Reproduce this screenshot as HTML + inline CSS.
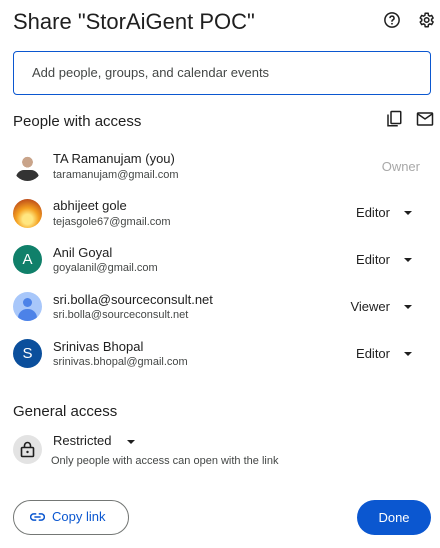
<!DOCTYPE html>
<html><head><style>
*{margin:0;padding:0;box-sizing:border-box}
body{width:440px;height:548px;background:#fff;font-family:"Liberation Sans",Arial,sans-serif;color:#1f1f1f;position:relative;overflow:hidden}
.a{position:absolute}
.av{position:absolute;left:13px;width:29px;height:29px;border-radius:50%;color:#fff;font-size:15px;text-align:center;line-height:29px}
.n{position:absolute;left:53px;font-size:13px;color:#1f1f1f}
.e{position:absolute;left:53px;font-size:11px;color:#444746}
.r{position:absolute;right:50px;font-size:13px;color:#1f1f1f;text-align:right}
.c{position:absolute;left:404px;width:0;height:0;border-left:4.5px solid transparent;border-right:4.5px solid transparent;border-top:4.5px solid #1f1f1f}
</style></head><body>
<div class="a" style="left:13px;top:9px;font-size:22px;">Share "StorAiGent POC"</div>
<svg class="a" style="left:383px;top:11px" width="18" height="18" viewBox="0 0 24 24"><circle cx="12" cy="12" r="9.5" fill="none" stroke="#1f1f1f" stroke-width="2"/><path d="M9.3 9.5a2.7 2.7 0 1 1 3.7 2.5c-.7.3-1 .8-1 1.5v.8" fill="none" stroke="#1f1f1f" stroke-width="2"/><circle cx="12" cy="17" r="1.2" fill="#1f1f1f"/></svg>
<svg class="a" style="left:417px;top:11px" width="18" height="18" viewBox="0 0 24 24"><path d="M19.4 13a7.5 7.5 0 0 0 0-2l2.1-1.6-2-3.5-2.5 1a7.3 7.3 0 0 0-1.7-1L14.9 3h-4l-.4 2.9a7.3 7.3 0 0 0-1.700 1l-2.5-1-2 3.5L6.4 11a7.5 7.5 0 0 0 0 2l-2.1 1.6 2 3.5 2.5-1a7.3 7.3 0 0 0 1.7 1l.4 2.9h4l.4-2.9a7.3 7.3 0 0 0 1.7-1l2.5 1 2-3.5z" fill="none" stroke="#1f1f1f" stroke-width="2" stroke-linejoin="round"/><circle cx="12.9" cy="12" r="3" fill="none" stroke="#1f1f1f" stroke-width="2"/></svg>
<div class="a" style="left:13px;top:51px;width:418px;height:44px;border:1.5px solid #0b57d0;border-radius:4px"></div>
<div class="a" style="left:32px;top:65px;font-size:13px;color:#444746">Add people, groups, and calendar events</div>
<div class="a" style="left:13px;top:113px;font-size:15px">People with access</div>
<svg class="a" style="left:385px;top:110px" width="18" height="18" viewBox="0 0 24 24"><rect x="8" y="2" width="13" height="16" rx="1" fill="none" stroke="#1f1f1f" stroke-width="2"/><path d="M4 6v15h13" fill="none" stroke="#1f1f1f" stroke-width="2"/></svg>
<svg class="a" style="left:416px;top:111px" width="18" height="16" viewBox="0 0 24 20"><rect x="2" y="2" width="20" height="16" rx="1" fill="none" stroke="#1f1f1f" stroke-width="2"/><path d="M2 3l10 7 10-7" fill="none" stroke="#1f1f1f" stroke-width="2"/></svg>

<div class="av" style="top:152px;background:radial-gradient(circle at 50% 35%,#c9a48a 0 22%,#fff 23%);overflow:hidden"><div style="position:absolute;left:3px;top:18px;width:23px;height:14px;border-radius:8px 8px 0 0;background:#333"></div></div>
<div class="n" style="top:151px">TA Ramanujam (you)</div><div class="e" style="top:169px">taramanujam@gmail.com</div>
<div class="a" style="right:20px;top:159px;font-size:13px;color:#a8a8a8">Owner</div>

<div class="av" style="top:199px;background:radial-gradient(circle at 50% 70%,#ffe680 0 20%,#f4a020 45%,#c0501a 80%)"></div>
<div class="n" style="top:198px">abhijeet gole</div><div class="e" style="top:216px">tejasgole67@gmail.com</div>
<div class="r" style="top:205px">Editor</div><div class="c" style="top:211px"></div>

<div class="av" style="top:245px;background:#10806a">A</div>
<div class="n" style="top:245px">Anil Goyal</div><div class="e" style="top:262px">goyalanil@gmail.com</div>
<div class="r" style="top:252px">Editor</div><div class="c" style="top:258px"></div>

<div class="av" style="top:292px;background:#a8c7fa;overflow:hidden"><div style="position:absolute;left:10px;top:6px;width:9px;height:9px;border-radius:50%;background:#4c82e8"></div><div style="position:absolute;left:5px;top:17px;width:19px;height:12px;border-radius:9px 9px 0 0;background:#4c82e8"></div></div>
<div class="n" style="top:292px">sri.bolla@sourceconsult.net</div><div class="e" style="top:309px">sri.bolla@sourceconsult.net</div>
<div class="r" style="top:299px">Viewer</div><div class="c" style="top:305px"></div>

<div class="av" style="top:339px;background:#0b4f9c">S</div>
<div class="n" style="top:339px">Srinivas Bhopal</div><div class="e" style="top:356px">srinivas.bhopal@gmail.com</div>
<div class="r" style="top:346px">Editor</div><div class="c" style="top:352px"></div>

<div class="a" style="left:13px;top:403px;font-size:15px">General access</div>
<div class="a" style="left:13px;top:435px;width:29px;height:29px;border-radius:50%;background:#e3e3e3"></div>
<svg class="a" style="left:20px;top:441px" width="15" height="17" viewBox="0 0 15 17"><rect x="1.5" y="6.5" width="12" height="9" rx="1" fill="none" stroke="#1f1f1f" stroke-width="1.6"/><path d="M4.5 6.5V4.5a3 3 0 0 1 6 0v2" fill="none" stroke="#1f1f1f" stroke-width="1.6"/><circle cx="7.5" cy="11" r="1.2" fill="#1f1f1f"/></svg>
<div class="a" style="left:53px;top:433px;font-size:13px">Restricted</div>
<div class="a" style="left:127px;top:440px;border-left:4px solid transparent;border-right:4px solid transparent;border-top:4px solid #1f1f1f"></div>
<div class="a" style="left:51px;top:455px;font-size:11px;color:#444746">Only people with access can open with the link</div>

<div class="a" style="left:13px;top:500px;width:116px;height:35px;border:1px solid #747775;border-radius:18px"></div>
<svg class="a" style="left:30px;top:511px" width="15" height="12" viewBox="0 0 24 12"><path d="M10 1H6a5 5 0 0 0 0 10h4M14 1h4a5 5 0 0 1 0 10h-4M7 6h10" fill="none" stroke="#0b57d0" stroke-width="2.4"/></svg>
<div class="a" style="left:52px;top:509px;font-size:13px;color:#0b57d0">Copy link</div>
<div class="a" style="left:357px;top:500px;width:74px;height:35px;border-radius:18px;background:#0b57d0;color:#fff;font-size:13px;text-align:center;line-height:35px">Done</div>
</body></html>
